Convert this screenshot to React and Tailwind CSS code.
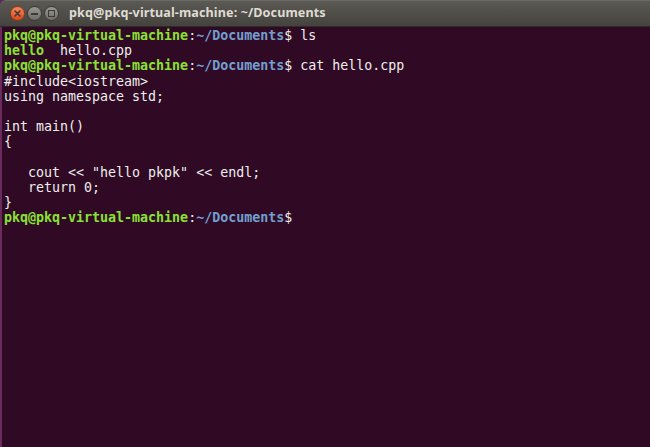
const G = ({ children }) => <span className="font-bold text-[#8ae234]">{children}</span>;
const B = ({ children }) => <span className="font-bold text-[#729fcf]">{children}</span>;

const Prompt = ({ cmd }) => (
  <div>
    <G>pkq@pkq-virtual-machine</G>
    <span>:</span>
    <B>~/Documents</B>
    <span>$ {cmd}</span>
  </div>
);

const WinButton = ({ kind }) => {
  if (kind === 'close') {
    return (
      <div className="w-[15px] h-[15px] rounded-full bg-gradient-to-b from-[#f6865c] to-[#dd4814] border border-[#8c3a1a] flex items-center justify-center">
        <svg width="7" height="7" viewBox="0 0 7 7">
          <path d="M1 1L6 6M6 1L1 6" stroke="#3c3b37" strokeWidth="1.6" strokeLinecap="round" />
        </svg>
      </div>
    );
  }
  return (
    <div className="w-[15px] h-[15px] rounded-full bg-gradient-to-b from-[#9a9891] to-[#6e6d68] border border-[#3a3934] flex items-center justify-center">
      {kind === 'min' ? (
        <div className="w-[7px] h-[2px] bg-[#3c3b37]" />
      ) : (
        <div className="w-[7px] h-[7px] border-[1.5px] border-[#3c3b37]" />
      )}
    </div>
  );
};

export default function App() {
  return (
    <div className="w-[650px] h-[447px] bg-[#300a24] flex flex-col overflow-hidden">
      <div className="h-[27px] shrink-0 bg-[#5e2750]">
        <div className="h-full rounded-tl-[6px] bg-gradient-to-b from-[#5a5954] to-[#44433e] border-t border-[#6b6a64] border-b border-b-[#2c2b28] flex items-center pl-[10px]">
          <div className="flex items-center gap-[2px]">
            <WinButton kind="close" />
            <WinButton kind="min" />
            <WinButton kind="max" />
          </div>
          <div className="ml-[10px] text-[#dfdbd2] font-bold text-[12.6px] tracking-[0.1px] font-['Noto_Sans',sans-serif] leading-none">
            pkq@pkq-virtual-machine: ~/Documents
          </div>
        </div>
      </div>
      <div className="flex flex-1">
        <div className="w-[2px] bg-[#6a2b5c]" />
        <div className="flex-1 pl-[2px] pt-px text-[#eeeeec] font-['DejaVu_Sans_Mono',monospace] text-[13.3px] leading-[15.17px] whitespace-pre">
          <Prompt cmd="ls" />
          <div><G>hello</G>  hello.cpp</div>
          <Prompt cmd="cat hello.cpp" />
          <div>#include&lt;iostream&gt;</div>
          <div>using namespace std;</div>
          <div> </div>
          <div>int main()</div>
          <div>{'{'}</div>
          <div> </div>
          <div>   cout &lt;&lt; "hello pkpk" &lt;&lt; endl;</div>
          <div>   return 0;</div>
          <div>{'}'}</div>
          <Prompt cmd="" />
        </div>
      </div>
    </div>
  );
}
